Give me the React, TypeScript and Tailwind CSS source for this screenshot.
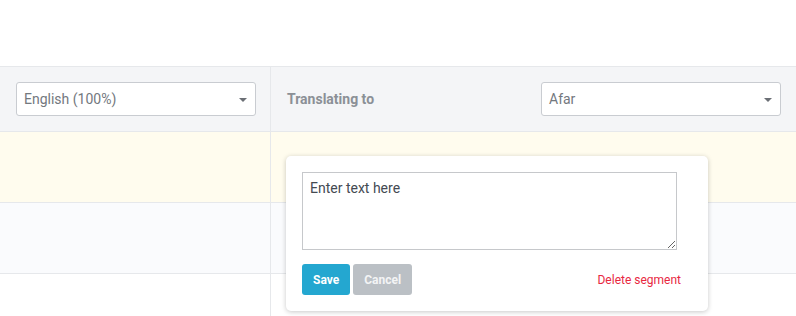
import { useState } from "react";

function Select({ value }: { value: string }) {
  return (
    <div className="relative flex h-[34px] w-[240px] items-center rounded-[3px] border border-[#c9ccd1] bg-white pl-[7px] text-[14px] text-[#73787e]">
      <span>{value}</span>
      <span className="absolute right-[8px] top-[15px] h-0 w-0 border-x-[4px] border-t-[4px] border-x-transparent border-t-[#6b6f75]" />
    </div>
  );
}

export default function App() {
  const [text] = useState("Enter text here");
  return (
    <div className="h-[316px] w-[796px] overflow-hidden bg-white font-['Roboto',sans-serif]">
      <div className="h-[67px] border-b border-[#e6e8eb]" />
      <div className="grid grid-cols-[271px_1fr]">
        <div className="flex h-[65px] items-center border-b border-r border-[#e6e8eb] bg-[#f4f5f7] pl-[16px]">
          <Select value="English (100%)" />
        </div>
        <div className="flex h-[65px] items-center justify-between border-b border-[#e6e8eb] bg-[#f4f5f7] pl-[16px] pr-[15px]">
          <span className="text-[14px] font-bold text-[#8b9096]">Translating to</span>
          <Select value="Afar" />
        </div>

        <div className="h-[71px] border-b border-r border-[#e6e8eb] bg-[#fffcee]" />
        <div className="relative h-[71px] border-b border-[#e6e8eb] bg-[#fffcee]">
          <div className="absolute left-[15px] top-[24px] z-10 w-[422px] rounded-[5px] bg-white p-[16px] shadow-[0_1px_5px_rgba(0,0,0,0.22)]">
            <textarea
              defaultValue={text}
              className="block h-[78px] w-[375px] resize-y border border-[#c6c8cb] px-[7px] py-[5px] text-[14px] leading-[20px] text-[#444a52] outline-none"
            />
            <div className="mt-[14px] flex items-center">
              <button className="h-[31px] rounded-[3px] bg-[#24a7d0] px-[11px] text-[12px] font-bold text-white">Save</button>
              <button className="ml-[3px] h-[31px] rounded-[3px] bg-[#bbc0c5] px-[11px] text-[12px] font-bold text-[#f3f4f5]">Cancel</button>
              <span className="ml-auto mr-[11px] text-[12px] text-[#e8283f]">Delete segment</span>
            </div>
          </div>
        </div>

        <div className="h-[71px] border-b border-r border-[#e6e8eb] bg-[#fafbfd]" />
        <div className="h-[71px] border-b border-[#e6e8eb] bg-[#fafbfd]" />

        <div className="h-[60px] border-r border-[#e6e8eb]" />
        <div className="h-[60px]" />
      </div>
    </div>
  );
}
